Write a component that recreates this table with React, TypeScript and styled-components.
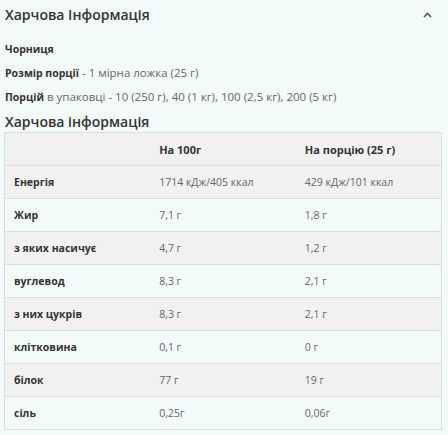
import React from "react";
import styled, { createGlobalStyle } from "styled-components";

const Global = createGlobalStyle`
  html, body { margin: 0; padding: 0; background: #f3fafa; }
  body { font-family: "Open Sans", "Noto Sans", sans-serif; color: #333; }
`;

const Page = styled.div`
  padding: 0 6px 0 4px;
  background: #f3fafa;
`;

const Header = styled.div`
  display: flex;
  align-items: center;
  justify-content: space-between;
  height: 29px;
`;

const Title = styled.h2`
  margin: 0;
  padding-left: 1px;
  font-size: 14px;
  line-height: 29px;
  font-weight: 600;
  color: #333;
`;

const Chevron = styled.svg`
  width: 9px;
  height: 6px;
  margin-right: 10px;
  margin-top: 1px;
`;

const Info = styled.div`
  margin-top: 8px;
  padding-left: 1px;
`;

const Line = styled.p`
  margin: 0;
  font-size: 11.5px;
  line-height: 24px;
  color: #666;
  white-space: nowrap;
`;

const Strong = styled.b`
  font-size: 10.5px;
  font-weight: 700;
  color: #333;
`;

const SubTitle = styled.h3`
  margin: 0;
  padding: 3px 0 0 1px;
  font-size: 14px;
  line-height: 20px;
  font-weight: 600;
  color: #333;
`;

const Table = styled.table`
  width: 100%;
  border-collapse: collapse;
  table-layout: fixed;
  border: 1px solid #dcdcdc;
`;

const Row = styled.tr<{ $shade: boolean }>`
  background: ${(p) => (p.$shade ? "#f1f1f1" : "#f3fafa")};
  border-bottom: 1px solid #dcdcdc;
`;

const Cell = styled.td<{ $bold?: boolean; $head?: boolean }>`
  height: 32px;
  padding: 0 0 0 9px;
  font-size: ${(p) => (p.$head ? "11px" : "10.5px")};
  white-space: nowrap;
  font-weight: ${(p) => (p.$bold ? 700 : 400)};
  color: ${(p) => (p.$bold ? "#333" : "#666")};
`;

const rows: [string, string, string][] = [
  ["Енергія", "1714 кДж/405 ккал", "429 кДж/101 ккал"],
  ["Жир", "7,1 г", "1,8 г"],
  ["з яких насичує", "4,7 г", "1,2 г"],
  ["вуглевод", "8,3 г", "2,1 г"],
  ["з них цукрів", "8,3 г", "2,1 г"],
  ["клітковина", "0,1 г", "0 г"],
  ["білок", "77 г", "19 г"],
  ["сіль", "0,25г", "0,06г"],
];

export default function App() {
  return (
    <Page>
      <Global />
      <Header>
        <Title>Харчова Інформація</Title>
        <Chevron viewBox="0 0 9 6">
          <path d="M1 5 L4.5 1.5 L8 5" fill="none" stroke="#555" strokeWidth="1.6" />
        </Chevron>
      </Header>
      <Info>
        <Line>
          <Strong>Чорниця</Strong>
        </Line>
        <Line>
          <Strong>Розмір порції</Strong> - 1 мірна ложка (25 г)
        </Line>
        <Line>
          <Strong>Порцій</Strong> в упаковці - 10 (250 г), 40 (1 кг), 100 (2,5 кг), 200 (5 кг)
        </Line>
      </Info>
      <SubTitle>Харчова інформація</SubTitle>
      <Table>
        <tbody>
          <Row $shade={true}>
            <Cell />
            <Cell $bold $head>На 100г</Cell>
            <Cell $bold $head>На порцію (25 г)</Cell>
          </Row>
          {rows.map((r, i) => (
            <Row key={r[0]} $shade={i % 2 === 0}>
              <Cell $bold>{r[0]}</Cell>
              <Cell>{r[1]}</Cell>
              <Cell>{r[2]}</Cell>
            </Row>
          ))}
        </tbody>
      </Table>
    </Page>
  );
}
